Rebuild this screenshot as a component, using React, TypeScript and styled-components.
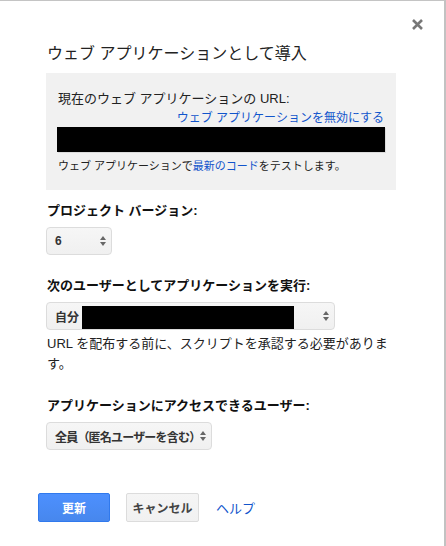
import styled, { createGlobalStyle } from "styled-components";

const GlobalStyle = createGlobalStyle`
  html, body {
    margin: 0;
    padding: 0;
    background: #fff;
  }
  body {
    font-family: "Liberation Sans", "Noto Sans CJK JP", sans-serif;
    color: #222;
  }
`;

const Dialog = styled.div`
  position: relative;
  box-sizing: border-box;
  width: 446px;
  height: 546px;
  border-top: 1px solid #c4c4c4;
  border-right: 2px solid #c2c2c2;
  padding: 43px 48px 0 46px;
`;

const CloseButton = styled.button`
  position: absolute;
  top: 17px;
  right: 20px;
  width: 13px;
  height: 13px;
  padding: 0;
  border: 0;
  background: none;
  cursor: pointer;
  display: flex;
  align-items: center;
  justify-content: center;
`;

const Title = styled.h1`
  margin: 0 0 9px 1px;
  font-size: 16px;
  line-height: 20px;
  font-weight: normal;
  color: #222;
`;

const InfoPanel = styled.div`
  background: #f1f1f1;
  padding: 18px 11px 17px 12px;
  display: flex;
  flex-direction: column;
`;

const PanelLabel = styled.div`
  font-size: 13px;
  line-height: 16px;
  color: #222;
`;

const DisableLink = styled.a`
  align-self: flex-end;
  margin: 4px 1px 0 0;
  font-size: 12px;
  line-height: 14px;
  color: #15c;
  text-decoration: none;
  cursor: pointer;
`;

const RedactedUrl = styled.div`
  margin: 2px 0 0 -1px;
  height: 25px;
  background: #000;
  box-shadow: 1px 1px 0 #dcdcdc;
`;

const TestNote = styled.div`
  margin-top: 7px;
  font-size: 11px;
  line-height: 14px;
  color: #222;

  a {
    color: #15c;
    text-decoration: none;
  }
`;

const Field = styled.div<{ $gap: number }>`
  margin-top: ${(p) => p.$gap}px;
  display: flex;
  flex-direction: column;
  align-items: flex-start;
`;

const FieldLabel = styled.label`
  margin: 0 0 8px 1px;
  font-size: 13px;
  line-height: 16px;
  font-weight: bold;
  color: #111;
`;

const Select = styled.div<{ $width: number; $tight?: boolean }>`
  box-sizing: border-box;
  width: ${(p) => p.$width}px;
  height: 28px;
  display: flex;
  align-items: center;
  padding: 0 5px 0 8px;
  border: 1px solid #dcdcdc;
  border-radius: 4px;
  background: linear-gradient(#f6f6f6, #f0f0f0);
  font-size: 12px;
  font-weight: bold;
  letter-spacing: ${(p) => (p.$tight ? "-0.8px" : "0")};
  color: #333;
  cursor: pointer;
`;

const SelectValue = styled.span`
  flex: 1;
  display: flex;
  align-items: center;
  white-space: nowrap;
  align-self: stretch;
`;

const Redacted = styled.span`
  align-self: flex-end;
  width: 212px;
  height: 23px;
  margin-left: 3px;
  background: #000;
`;

const Hint = styled.p`
  margin: 4px 0 0 1px;
  font-size: 13px;
  line-height: 20px;
  color: #222;
`;

const Actions = styled.div`
  margin: 43px 0 0 -8px;
  display: flex;
  align-items: center;
  gap: 16px;
`;

const Button = styled.button<{ $primary?: boolean }>`
  box-sizing: border-box;
  height: 29px;
  width: ${(p) => (p.$primary ? 72 : 73)}px;
  padding: 0;
  border-radius: 2px;
  border: 1px solid ${(p) => (p.$primary ? "#3079ed" : "#dcdcdc")};
  background: ${(p) =>
    p.$primary ? "linear-gradient(#4d90fe, #4787ed)" : "linear-gradient(#f5f5f5, #f1f1f1)"};
  color: ${(p) => (p.$primary ? "#fff" : "#444")};
  font-family: inherit;
  font-size: 12px;
  font-weight: bold;
  cursor: pointer;
`;

const HelpLink = styled.a`
  margin-left: 1px;
  font-size: 13px;
  color: #15c;
  text-decoration: none;
  cursor: pointer;
`;

const Arrows = () => (
  <svg width="6" height="10" viewBox="0 0 6 10" style={{ flexShrink: 0 }}>
    <path d="M3 0 L6 4 H0 Z" fill="#666" />
    <path d="M0 6 H6 L3 10 Z" fill="#666" />
  </svg>
);

export default function App() {
  return (
    <>
      <GlobalStyle />
      <Dialog>
        <CloseButton aria-label="閉じる">
          <svg width="11" height="11" viewBox="0 0 11 11">
            <path d="M1 1 L10 10 M10 1 L1 10" stroke="#777" strokeWidth="2.6" />
          </svg>
        </CloseButton>

        <Title>ウェブ アプリケーションとして導入</Title>

        <InfoPanel>
          <PanelLabel>現在のウェブ アプリケーションの URL:</PanelLabel>
          <DisableLink>ウェブ アプリケーションを無効にする</DisableLink>
          <RedactedUrl />
          <TestNote>
            ウェブ アプリケーションで<a>最新のコード</a>をテストします。
          </TestNote>
        </InfoPanel>

        <Field $gap={13}>
          <FieldLabel>プロジェクト バージョン:</FieldLabel>
          <Select $width={66}>
            <SelectValue>6</SelectValue>
            <Arrows />
          </Select>
        </Field>

        <Field $gap={23}>
          <FieldLabel>次のユーザーとしてアプリケーションを実行:</FieldLabel>
          <Select $width={289}>
            <SelectValue>
              自分
              <Redacted />
            </SelectValue>
            <Arrows />
          </Select>
          <Hint>URL を配布する前に、スクリプトを承認する必要があります。</Hint>
        </Field>

        <Field $gap={24}>
          <FieldLabel>アプリケーションにアクセスできるユーザー:</FieldLabel>
          <Select $width={166} $tight>
            <SelectValue>全員（匿名ユーザーを含む）</SelectValue>
            <Arrows />
          </Select>
        </Field>

        <Actions>
          <Button $primary>更新</Button>
          <Button>キャンセル</Button>
          <HelpLink>ヘルプ</HelpLink>
        </Actions>
      </Dialog>
    </>
  );
}
